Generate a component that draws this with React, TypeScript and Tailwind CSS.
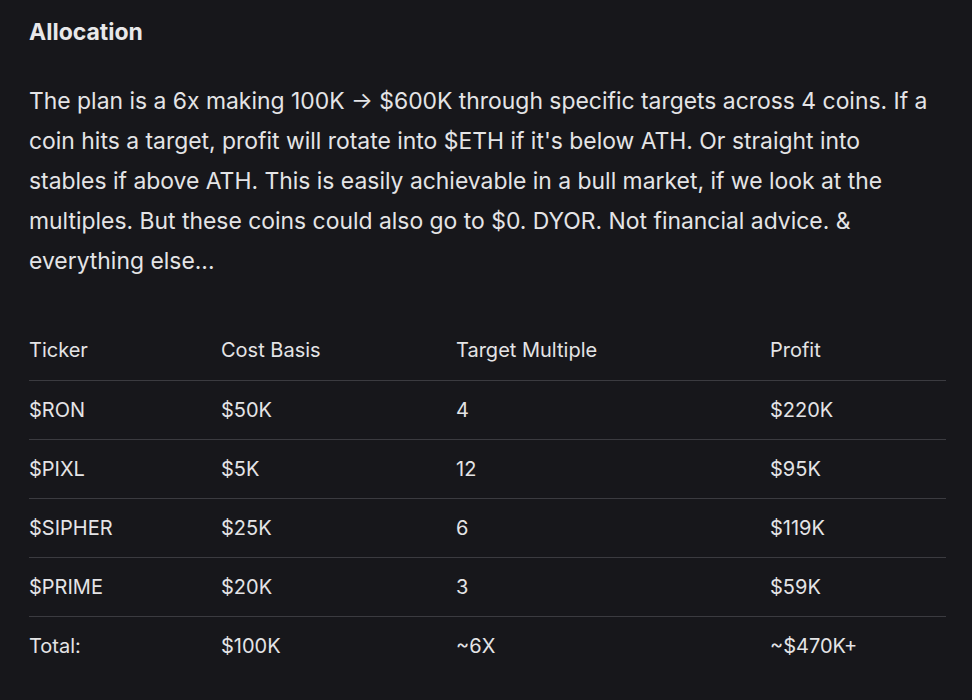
import React from 'react';

const rows = [
  ['$RON', '$50K', '4', '$220K'],
  ['$PIXL', '$5K', '12', '$95K'],
  ['$SIPHER', '$25K', '6', '$119K'],
  ['$PRIME', '$20K', '3', '$59K'],
  ['Total:', '$100K', '~6X', '~$470K+'],
];

const App = () => {
  return (
    <div className="min-h-[700px] w-[972px] bg-[#17171b] text-[#e4e4e6] font-['Inter',sans-serif] pl-[29px] pr-[26px] pt-[18px]">
      <h2 className="text-[23px] leading-[28px] font-bold text-[#e8e8ea]">Allocation</h2>
      <p className="mt-[35px] mr-[12px] text-[22.9px] leading-[40px]">
        The plan is a 6x making 100K → $600K through specific targets across 4 coins. If a coin hits a target, profit will rotate into $ETH if it's below ATH. Or straight into stables if above ATH. This is easily achievable in a bull market, if we look at the multiples. But these coins could also go to $0. DYOR. Not financial advice. &amp; everything else...
      </p>
      <table className="mt-[40px] w-full text-[20px] text-left border-collapse">
        <thead>
          <tr className="border-b border-[#3b3b40]">
            <th className="font-normal w-[192px] h-[59px]">Ticker</th>
            <th className="font-normal w-[235px]">Cost Basis</th>
            <th className="font-normal w-[314px]">Target Multiple</th>
            <th className="font-normal">Profit</th>
          </tr>
        </thead>
        <tbody>
          {rows.map((r, i) => (
            <tr key={i} className={i < rows.length - 1 ? 'border-b border-[#3b3b40]' : ''}>
              {r.map((c, j) => (
                <td key={j} className="h-[59px]">{c}</td>
              ))}
            </tr>
          ))}
        </tbody>
      </table>
    </div>
  );
};

export default App;
